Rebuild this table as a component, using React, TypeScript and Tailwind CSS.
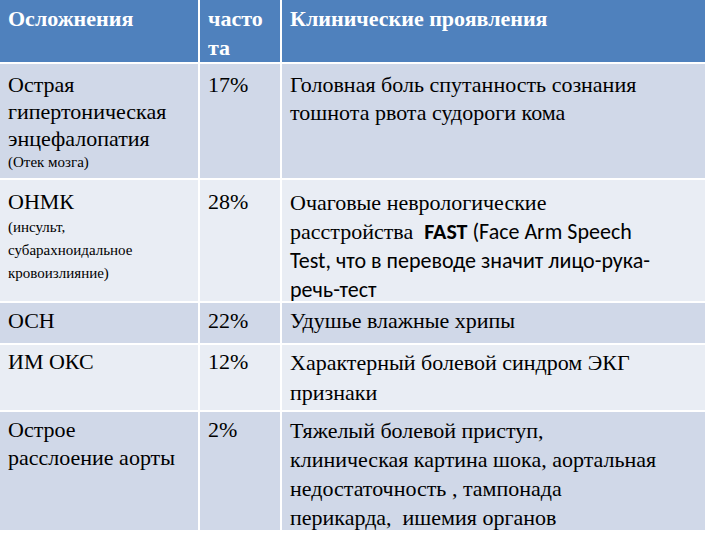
import React from "react";

function H({ children }: { children: React.ReactNode }) {
  return (
    <div className="font-[Liberation_Serif,DejaVu_Serif_Condensed,serif] bg-[#4f81bd] px-[8px] pt-[4px] text-white font-bold text-[22px] leading-[29px] whitespace-nowrap">
      {children}
    </div>
  );
}

function C({ children, odd, pt }: { children: React.ReactNode; odd: boolean; pt: string }) {
  return (
    <div className={`font-[Liberation_Serif,DejaVu_Serif_Condensed,serif] ${odd ? "bg-[#d0d8e8]" : "bg-[#e9edf4]"} px-[8px] ${pt} text-black text-[22px] leading-[28px] whitespace-nowrap`}>
      {children}
    </div>
  );
}

export default function App() {
  return (
    <div className="font-[Liberation_Serif,DejaVu_Serif_Condensed,serif] w-[720px] h-[540px] bg-white">
      <div className="grid grid-cols-[198px_80px_423px] grid-rows-[62px_114px_121px_40px_65px_118px] gap-[2px] bg-white w-[705px]">
        <H>Осложнения</H>
        <H>часто<br />та</H>
        <H>Клинические проявления</H>

        <C odd pt="pt-[7px]">
          <div className="leading-[27px]">Острая<br />гипертоническая<br />энцефалопатия</div>
          <div className="text-[15px] leading-[20px]">(Отек мозга)</div>
        </C>
        <C odd pt="pt-[7px]">17%</C>
        <C odd pt="pt-[7px]">
          Головная боль спутанность сознания<br />тошнота рвота судороги кома
        </C>

        <C odd={false} pt="pt-[8px]">
          <div>ОНМК</div>
          <div className="text-[15px] leading-[23px]">(инсульт,<br />субарахноидальное<br />кровоизлияние)</div>
        </C>
        <C odd={false} pt="pt-[8px]">28%</C>
        <C odd={false} pt="pt-[8px]">
          <div className="leading-[29px]">
            Очаговые неврологические<br />
            расстройства&nbsp;{" "}
            <span className="font-[Carlito] text-[22px]">
              <b>FAST</b> (Face Arm Speech<br />Test, что в переводе значит лицо-рука-<br />речь-тест
            </span>
          </div>
        </C>

        <C odd pt="pt-[4px]">ОСН</C>
        <C odd pt="pt-[4px]">22%</C>
        <C odd pt="pt-[4px]">Удушье влажные хрипы</C>

        <C odd={false} pt="pt-[3px]">ИМ ОКС</C>
        <C odd={false} pt="pt-[3px]">12%</C>
        <C odd={false} pt="pt-[3px]">
          <div className="leading-[30px]">Характерный болевой синдром ЭКГ<br />признаки</div>
        </C>

        <C odd pt="pt-[4px]">Острое<br />расслоение аорты</C>
        <C odd pt="pt-[4px]">2%</C>
        <C odd pt="pt-[4px]">
          <div className="leading-[29px]">
            Тяжелый болевой приступ,<br />клиническая картина шока, аортальная<br />недостаточность , тампонада<br />перикарда,&nbsp; ишемия органов
          </div>
        </C>
      </div>
    </div>
  );
}
